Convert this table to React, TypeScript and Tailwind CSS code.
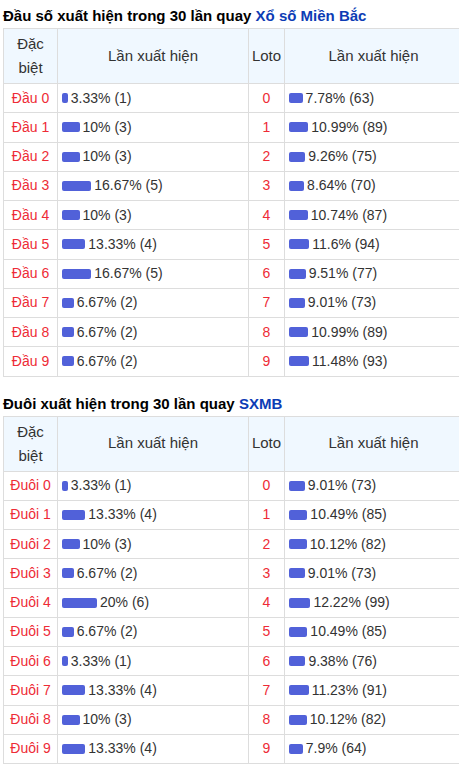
import React from 'react'

type Row = { label: string; pct: number; count: number; loto: number; lpct: number; lcount: number }

const dau: Row[] = [
  { label: 'Đầu 0', pct: 3.33, count: 1, loto: 0, lpct: 7.78, lcount: 63 },
  { label: 'Đầu 1', pct: 10, count: 3, loto: 1, lpct: 10.99, lcount: 89 },
  { label: 'Đầu 2', pct: 10, count: 3, loto: 2, lpct: 9.26, lcount: 75 },
  { label: 'Đầu 3', pct: 16.67, count: 5, loto: 3, lpct: 8.64, lcount: 70 },
  { label: 'Đầu 4', pct: 10, count: 3, loto: 4, lpct: 10.74, lcount: 87 },
  { label: 'Đầu 5', pct: 13.33, count: 4, loto: 5, lpct: 11.6, lcount: 94 },
  { label: 'Đầu 6', pct: 16.67, count: 5, loto: 6, lpct: 9.51, lcount: 77 },
  { label: 'Đầu 7', pct: 6.67, count: 2, loto: 7, lpct: 9.01, lcount: 73 },
  { label: 'Đầu 8', pct: 6.67, count: 2, loto: 8, lpct: 10.99, lcount: 89 },
  { label: 'Đầu 9', pct: 6.67, count: 2, loto: 9, lpct: 11.48, lcount: 93 },
]

const duoi: Row[] = [
  { label: 'Đuôi 0', pct: 3.33, count: 1, loto: 0, lpct: 9.01, lcount: 73 },
  { label: 'Đuôi 1', pct: 13.33, count: 4, loto: 1, lpct: 10.49, lcount: 85 },
  { label: 'Đuôi 2', pct: 10, count: 3, loto: 2, lpct: 10.12, lcount: 82 },
  { label: 'Đuôi 3', pct: 6.67, count: 2, loto: 3, lpct: 9.01, lcount: 73 },
  { label: 'Đuôi 4', pct: 20, count: 6, loto: 4, lpct: 12.22, lcount: 99 },
  { label: 'Đuôi 5', pct: 6.67, count: 2, loto: 5, lpct: 10.49, lcount: 85 },
  { label: 'Đuôi 6', pct: 3.33, count: 1, loto: 6, lpct: 9.38, lcount: 76 },
  { label: 'Đuôi 7', pct: 13.33, count: 4, loto: 7, lpct: 11.23, lcount: 91 },
  { label: 'Đuôi 8', pct: 10, count: 3, loto: 8, lpct: 10.12, lcount: 82 },
  { label: 'Đuôi 9', pct: 13.33, count: 4, loto: 9, lpct: 7.9, lcount: 64 },
]

function Bar({ pct, count }: { pct: number; count: number }) {
  return (
    <div className="flex items-center pl-[4px] border-r border-b border-[#dddddd] text-[14px] text-[#333]">
      <span className="inline-block h-[10px] rounded-[2px] bg-[#5161d9] mr-[3px]" style={{ width: Math.max(4, pct * 1.75) }} />
      {pct}% ({count})
    </div>
  )
}

function StatTable({ rows }: { rows: Row[] }) {
  const cell = 'flex items-center justify-center border-r border-b border-[#dddddd]'
  const head = `${cell} bg-[#f0f8ff] text-[15px] text-[#333]`
  return (
    <div className="ml-[3px] w-[460px] grid grid-cols-[54px_191px_36px_1fr] grid-rows-[55px_repeat(10,29.25px)] border-l border-t border-[#dddddd]">
      <div className={`${head} text-center leading-[24px]`}>
        Đặc<br />biệt
      </div>
      <div className={head}>Lần xuất hiện</div>
      <div className={head}>Loto</div>
      <div className={head}>Lần xuất hiện</div>
      {rows.map((r) => (
        <React.Fragment key={r.label}>
          <div className={`${cell} text-[14px] text-[#ee2b36]`}>{r.label}</div>
          <Bar pct={r.pct} count={r.count} />
          <div className={`${cell} text-[14px] text-[#ee2b36]`}>{r.loto}</div>
          <Bar pct={r.lpct} count={r.lcount} />
        </React.Fragment>
      ))}
    </div>
  )
}

export default function App() {
  return (
    <div className="w-[459px] overflow-hidden bg-white font-['Liberation_Sans',Arial,sans-serif]">
      <h3 className="h-[28px] pl-[3px] pt-[6px] text-[15px] font-bold text-black leading-[20px]">
        Đầu số xuất hiện trong 30 lần quay <a className="text-[#0d3cb5]">Xổ số Miền Bắc</a>
      </h3>
      <StatTable rows={dau} />
      <h3 className="h-[39px] pl-[3px] pt-[17px] text-[15px] font-bold text-black leading-[20px]">
        Đuôi xuất hiện trong 30 lần quay <a className="text-[#0d3cb5]">SXMB</a>
      </h3>
      <StatTable rows={duoi} />
    </div>
  )
}
